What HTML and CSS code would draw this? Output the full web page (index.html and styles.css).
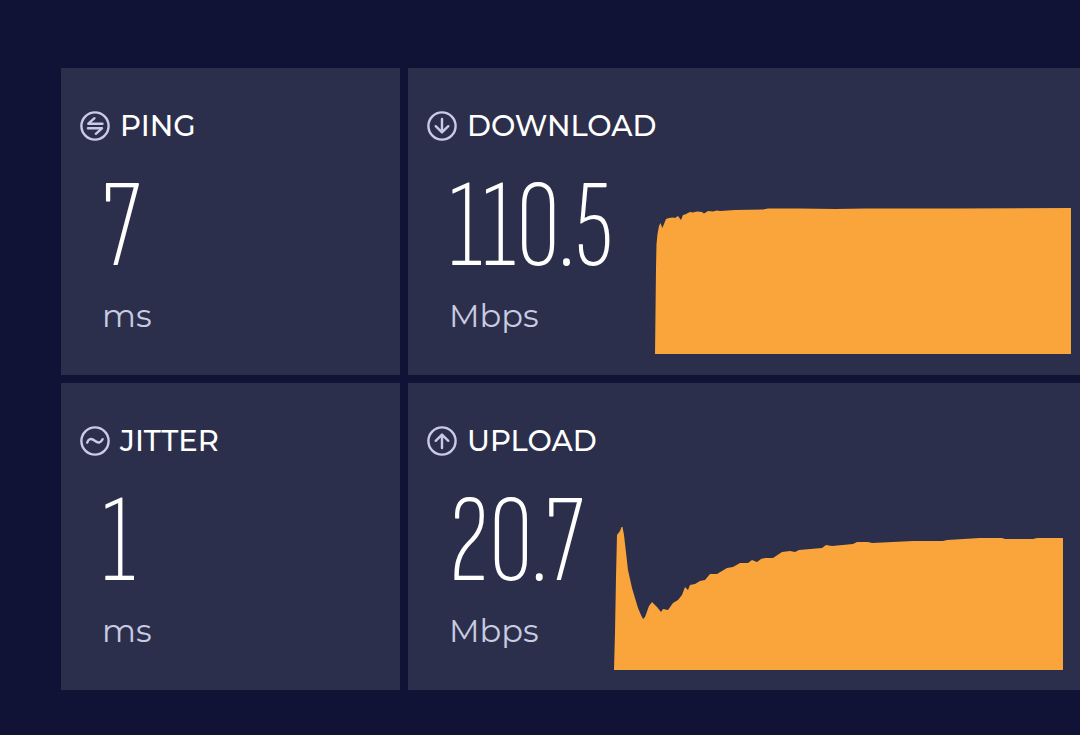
FILE: index.html
```html
<!DOCTYPE html>
<html lang="en">
<head>
<meta charset="utf-8">
<title>Speed test results</title>
<link rel="stylesheet" href="styles.css">
</head>
<body>
<main class="results">
  <section class="card">
    <h2 class="card-title">
      <svg class="icon" viewBox="0 0 30 30" aria-hidden="true"><circle cx="15" cy="15" r="13.6"/><path d="M22.500 12.700H8.300l6.200-5.500M8 17.300h14l-6.200 5.500"/></svg>
      PING
    </h2>
    <div class="metric">
      <div class="value">7</div>
      <div class="unit">ms</div>
    </div>
  </section>

  <section class="card">
    <h2 class="card-title">
      <svg class="icon" viewBox="0 0 30 30" aria-hidden="true"><circle cx="15" cy="15" r="13.6"/><path d="M15 8v13M8.700 15.200 15 21.400l6.300-6.200"/></svg>
      DOWNLOAD
    </h2>
    <div class="metric with-chart download">
      <div class="reading">
        <div class="value">110.5</div>
        <div class="unit">Mbps</div>
      </div>
      <svg class="chart" viewBox="0 0 416 146" preserveAspectRatio="none" role="img" aria-label="Download speed over time"><path d="M0 146 1 60 1.500 36 2.500 26 4 18 5.500 15 7.300 20 9 16 11 11 14 10 18 9.500 20 10 23 8 26 12 28 7 30 6.500 35 4 38 4.500 42 3.500 47 4 49 5.500 53 3 58 3.500 62 2.500 65 3 80 2 108 1.500 113 .5 145 .5 180 1 210 .5 300 .5 416 0V146Z"/></svg>
    </div>
  </section>

  <section class="card">
    <h2 class="card-title">
      <svg class="icon" viewBox="0 0 30 30" aria-hidden="true"><circle cx="15" cy="15" r="13.6"/><path d="M7.200 16.600c1.400-4.200 4.200-4.600 7.600-1.800s6 2.200 7.800-1.600"/></svg>
      JITTER
    </h2>
    <div class="metric">
      <div class="value">1</div>
      <div class="unit">ms</div>
    </div>
  </section>

  <section class="card">
    <h2 class="card-title">
      <svg class="icon" viewBox="0 0 30 30" aria-hidden="true"><circle cx="15" cy="15" r="13.6"/><path d="M15 22V9M8.700 14.800 15 8.600l6.300 6.200"/></svg>
      UPLOAD
    </h2>
    <div class="metric with-chart upload">
      <div class="reading">
        <div class="value">20.7</div>
        <div class="unit">Mbps</div>
      </div>
      <svg class="chart" viewBox="0 0 449 143" preserveAspectRatio="none" role="img" aria-label="Upload speed over time"><path d="M0 143 1 105 2 50 3 8 6 4 7.500 0 8.500 0 10 8 14 43 18 61 24 81 27 88 29 92 31 90 35 79 38 75 43 80 47 85 49 82 54 83 59 76 64 73 68 68 71 60 74 63 76 58 81 57 86 54 91 53 96 47 103 47 113 41 119 40 126 36 134 36 138 33 143 35 147 32 151 31 159 31 165 27 168 25 176 24 181 25 185 23 208 21 212 18 218 19 239 17 243 15 254 15 258 16 299 14 329 14 333 13 366 11 388 11 391 12 419 12 423 11 449 11V143Z"/></svg>
    </div>
  </section>
</main>
</body>
</html>
```
FILE: styles.css
```css
* {
  box-sizing: border-box;
}

body {
  margin: 0;
  background: #101336;
  color: #fff;
  font-family: Montserrat, "Open Sans", sans-serif;
}

.results {
  display: grid;
  grid-template-columns: 339px 1fr;
  gap: 8px;
  padding: 68px 0 45px 61px;
}

.card {
  padding: 40px 0 20px 19px;
  background: #2c2f4b;
}

.card-title {
  display: flex;
  align-items: center;
  gap: 10px;
  margin: 0;
  font-size: 29px;
  font-weight: 500;
  line-height: 35px;
}

.icon {
  width: 30px;
  height: 30px;
  fill: none;
  stroke: #c9cbe6;
  stroke-width: 2.4;
  stroke-linecap: round;
  stroke-linejoin: round;
}

.metric {
  padding-left: 22px;
}

.with-chart {
  display: grid;
  align-items: end;
}

.download {
  grid-template-columns: 206px 1fr;
  padding-right: 9px;
}

.upload {
  grid-template-columns: 165px 1fr;
  padding-right: 17px;
}

.value {
  padding-top: 23px;
  font-family: "Sofia Sans Extra Condensed", "Roboto Condensed", sans-serif;
  font-size: 124px;
  font-weight: 200;
  line-height: 124px;
}

.unit {
  padding-bottom: 13px;
  color: #c9cbe0;
  font-size: 32px;
  line-height: 52px;
}

.chart {
  display: block;
  width: 100%;
  height: 146px;
  fill: #f9a53b;
}

.download .chart {
  margin-bottom: 1px;
}

.upload .chart {
  height: 143px;
}
```
